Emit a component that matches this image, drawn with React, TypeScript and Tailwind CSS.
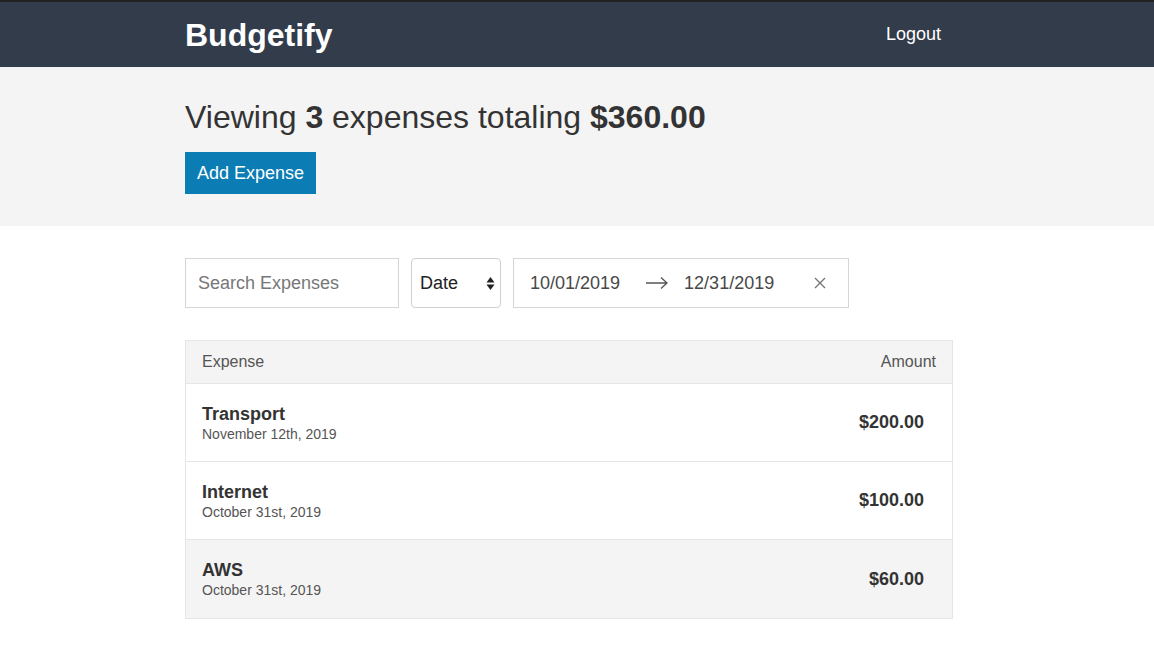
const expenses = [
  { name: 'Transport', date: 'November 12th, 2019', amount: '$200.00' },
  { name: 'Internet', date: 'October 31st, 2019', amount: '$100.00' },
  { name: 'AWS', date: 'October 31st, 2019', amount: '$60.00', hover: true },
];

// the original page had a scrollbar, so the centred column sits 8px left
const wrap = 'w-[784px] mx-auto pr-4';

function Header() {
  return (
    <header className="bg-[#333c4b] border-t-2 border-[#222]">
      <div className={`${wrap} h-[65px] flex items-center justify-between`}>
        <h1 className="text-white font-bold text-[32px] leading-none">Budgetify</h1>
        <button className="text-white text-[18px] px-3">Logout</button>
      </div>
    </header>
  );
}

function Summary() {
  return (
    <div className="bg-[#f4f4f4] h-[159px]">
      <div className={`${wrap} pt-[30px]`}>
        <h2 className="text-[32px] text-[#333] leading-[40px]">
          Viewing <span className="font-bold">3</span> expenses totaling{' '}
          <span className="font-bold">$360.00</span>
        </h2>
        <button className="mt-[15px] h-[42px] px-3 bg-[#0b7cb4] text-white text-[18px]">
          Add Expense
        </button>
      </div>
    </div>
  );
}

function Filters() {
  return (
    <div className="flex gap-3 h-[50px]">
      <div className="w-[214px] border border-[#d6d6d6] flex items-center px-3 text-[18px] text-[#777]">
        Search Expenses
      </div>
      <div className="w-[90px] border border-[#cfcfcf] rounded-[4px] flex items-center justify-between pl-2 pr-[5px] text-[18px] text-[#222]">
        <span>Date</span>
        <svg width="9" height="15" viewBox="0 0 9 15">
          <path d="M4.5 1 L8.5 6.5 H0.5 Z" fill="#222" />
          <path d="M4.5 14 L8.5 8.5 H0.5 Z" fill="#222" />
        </svg>
      </div>
      <div className="w-[336px] border border-[#d6d6d6] flex items-center pl-4 text-[18px] text-[#484848]">
        <span>10/01/2019</span>
        <svg className="ml-[25px]" width="24" height="14" viewBox="0 0 24 14">
          <path d="M1 7 H22 M16 1.5 L22 7 L16 12.5" fill="none" stroke="#555" strokeWidth="1.3" />
        </svg>
        <span className="ml-[15px]">12/31/2019</span>
        <svg className="ml-[40px]" width="12" height="12" viewBox="0 0 12 12">
          <path d="M1 1 L11 11 M11 1 L1 11" fill="none" stroke="#777" strokeWidth="1.4" />
        </svg>
      </div>
    </div>
  );
}

function ExpenseTable() {
  return (
    <div className="mt-8 border border-[#e5e5e5]">
      <div className="h-[43px] bg-[#f4f4f4] flex items-center justify-between px-4 text-[16px] text-[#555] border-b border-[#e5e5e5]">
        <span>Expense</span>
        <span>Amount</span>
      </div>
      {expenses.map((e, i) => (
        <div
          key={e.name}
          className={`h-[78px] flex items-center justify-between pl-4 pr-7 ${
            e.hover ? 'bg-[#f4f4f4]' : 'bg-white'
          } ${i < expenses.length - 1 ? 'border-b border-[#e5e5e5]' : ''}`}
        >
          <div>
            <div className="text-[18px] font-bold text-[#333] leading-[22px]">{e.name}</div>
            <div className="text-[14px] text-[#555] leading-[18px]">{e.date}</div>
          </div>
          <div className="text-[18px] font-bold text-[#333]">{e.amount}</div>
        </div>
      ))}
    </div>
  );
}

export default function App() {
  return (
    <div className="min-h-screen bg-white" style={{ fontFamily: '"Liberation Sans", Arial, sans-serif' }}>
      <Header />
      <Summary />
      <main className={`${wrap} pt-8`}>
        <Filters />
        <ExpenseTable />
      </main>
    </div>
  );
}
